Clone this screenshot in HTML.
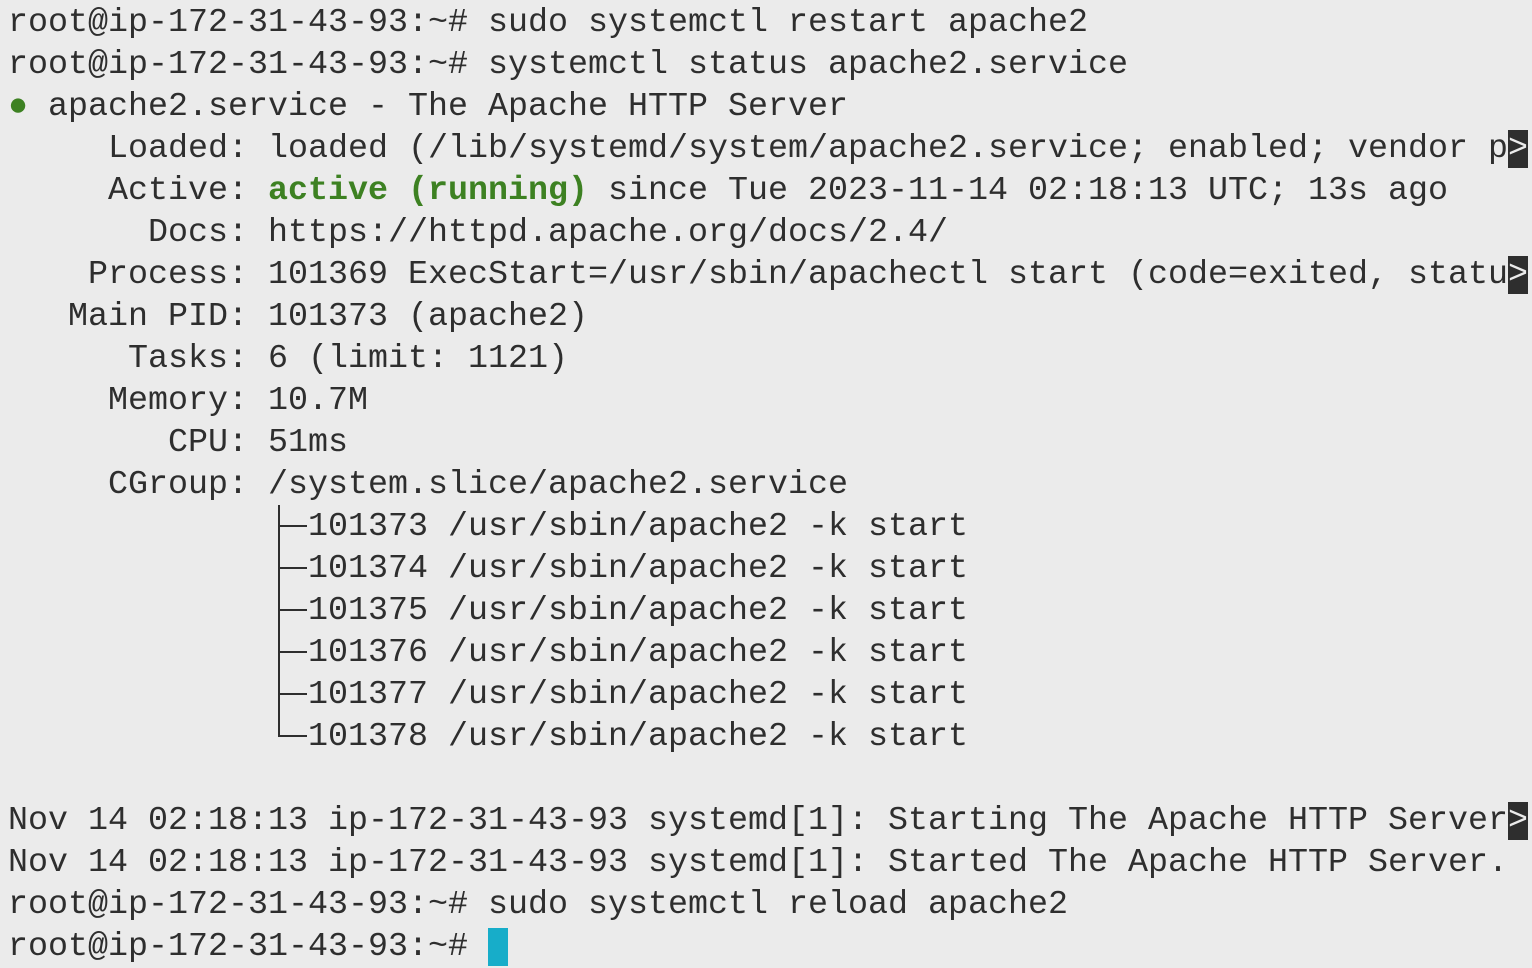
<!DOCTYPE html>
<html><head><style>
html,body{margin:0;padding:0;background:#ebebeb;width:1532px;height:967px;overflow:hidden}
pre{position:absolute;left:8px;top:2px;margin:0;font-family:"Liberation Mono",monospace;font-size:33.33px;line-height:42px;color:#2e2e2e;white-space:pre}
.g{color:#3d8122;font-weight:bold}
.d{color:#3d8122}
.r{background:#2e2e2e;color:#ebebeb}
.c{background:#17adc9}
.v{position:absolute;left:278px;top:505px;width:2px;height:232px;background:#2e2e2e}
.h{position:absolute;left:278px;width:29px;height:2px;background:#2e2e2e}
</style></head><body>
<pre>root@ip-172-31-43-93:~# sudo systemctl restart apache2
root@ip-172-31-43-93:~# systemctl status apache2.service
<span class="d">●</span> apache2.service - The Apache HTTP Server
     Loaded: loaded (/lib/systemd/system/apache2.service; enabled; vendor p<span class="r">&gt;</span>
     Active: <span class="g">active (running)</span> since Tue 2023-11-14 02:18:13 UTC; 13s ago
       Docs: https://httpd.apache.org/docs/2.4/
    Process: 101369 ExecStart=/usr/sbin/apachectl start (code=exited, statu<span class="r">&gt;</span>
   Main PID: 101373 (apache2)
      Tasks: 6 (limit: 1121)
     Memory: 10.7M
        CPU: 51ms
     CGroup: /system.slice/apache2.service
               101373 /usr/sbin/apache2 -k start
               101374 /usr/sbin/apache2 -k start
               101375 /usr/sbin/apache2 -k start
               101376 /usr/sbin/apache2 -k start
               101377 /usr/sbin/apache2 -k start
               101378 /usr/sbin/apache2 -k start

Nov 14 02:18:13 ip-172-31-43-93 systemd[1]: Starting The Apache HTTP Server<span class="r">&gt;</span>
Nov 14 02:18:13 ip-172-31-43-93 systemd[1]: Started The Apache HTTP Server.
root@ip-172-31-43-93:~# sudo systemctl reload apache2
root@ip-172-31-43-93:~# <span class="c"> </span></pre>
<div class="v"></div>
<div class="h" style="top:525px"></div>
<div class="h" style="top:567px"></div>
<div class="h" style="top:609px"></div>
<div class="h" style="top:651px"></div>
<div class="h" style="top:693px"></div>
<div class="h" style="top:735px"></div>
</body></html>
